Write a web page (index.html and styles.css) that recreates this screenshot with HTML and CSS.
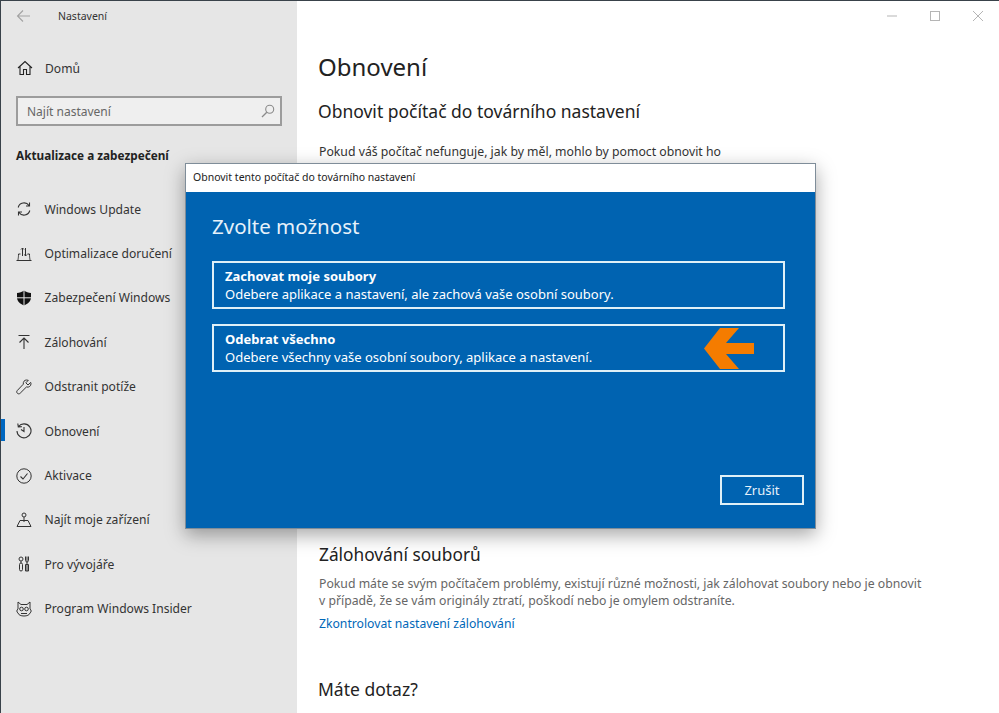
FILE: index.html
```html
<!DOCTYPE html>
<html lang="cs">
<head>
<meta charset="utf-8">
<title>Nastavení</title>
<link rel="stylesheet" href="styles.css">
</head>
<body>
<div class="window">
  <aside class="sidebar">
    <div class="titlebar">
      <svg class="back" width="16" height="14" viewBox="0 0 16 14"><path d="M14 7H1.500M7 1.500 1.500 7 7 12.500" fill="none" stroke="#a3a3a3" stroke-width="1.100"/></svg>
      <span class="app-title">Nastavení</span>
    </div>
    <div class="home">
      <svg class="icon" width="16" height="16" viewBox="0 0 16 16"><path d="M1 8 8 1.500 15 8M3 6.500V14.500H6.500V9.500H9.500V14.500H13V6.500" fill="none" stroke="#222" stroke-width="1.100"/></svg>
      <span>Domů</span>
    </div>
    <div class="search">
      <span>Najít nastavení</span>
      <svg width="14" height="14" viewBox="0 0 14 14"><circle cx="8.700" cy="5.300" r="4" fill="none" stroke="#8a8a8a" stroke-width="1.100"/><path d="M5.800 8.200 1 13" stroke="#8a8a8a" stroke-width="1.300"/></svg>
    </div>
    <h2 class="section">Aktualizace a zabezpečení</h2>
    <nav class="nav">
      <div class="nav-item">
        <svg class="icon" width="16" height="16" viewBox="0 0 16 16"><path d="M2.200 6.500A6 6 0 0 1 13 4.500M13.800 9.500A6 6 0 0 1 3 11.500M13.500 1.500V5H10M2.500 14.500V11H6" fill="none" stroke="#333" stroke-width="1.100"/></svg>
        <span>Windows Update</span>
      </div>
      <div class="nav-item">
        <svg class="icon" width="16" height="16" viewBox="0 0 16 16"><path d="M.5 14.500H15.500M2 14.500C2 12.500 2.500 12.500 2.500 8H4.500M14 14.500C14 12.500 13.500 12.500 13.500 8H11.500M6.500 10V2M5 3.500 6.500 2 8 3.500M9.500 2V10M8.500 8.500 9.500 10 11 8.500" fill="none" stroke="#333" stroke-width="1"/></svg>
        <span>Optimalizace doručení</span>
      </div>
      <div class="nav-item">
        <svg class="icon" width="16" height="16" viewBox="0 0 16 16"><path d="M8 .5C6 2 3.500 2.800 1 3V7.500C1 11 4 14 8 15.500 12 14 15 11 15 7.500V3C12.500 2.800 10 2 8 .5Z" fill="#111"/><path d="M8 0V16M0 7.800H16" stroke="#e6e6e6" stroke-width="1"/></svg>
        <span>Zabezpečení Windows</span>
      </div>
      <div class="nav-item">
        <svg class="icon" width="16" height="16" viewBox="0 0 16 16"><path d="M2.500 1.500H13.500M8 15V4M3.500 8.500 8 4l4.500 4.500" fill="none" stroke="#333" stroke-width="1.100"/></svg>
        <span>Zálohování</span>
      </div>
      <div class="nav-item">
        <svg class="icon" width="16" height="16" viewBox="0 0 16 16"><path d="M10.500 1C8.500 1 7 2.700 7.300 5.200L1.300 11.500C.500 12.300.500 13.500 1.400 14.300 2.200 15.100 3.400 15 4.200 14.200L10.400 8C13 8.700 15 7 15 4.700 15 4.200 14.900 3.800 14.700 3.400L12 6 9.800 3.800 12.300 1.300C11.800 1.100 11.100 1 10.500 1Z" fill="none" stroke="#333" stroke-width="1"/></svg>
        <span>Odstranit potíže</span>
      </div>
      <div class="nav-item active">
        <svg class="icon" width="16" height="16" viewBox="0 0 16 16"><path d="M2.500 3.500A7 7 0 1 1 1 8M1.800 .5 2.300 4 5.800 3.600M8 4V8.500L5 6.500" fill="none" stroke="#333" stroke-width="1.100"/></svg>
        <span>Obnovení</span>
      </div>
      <div class="nav-item">
        <svg class="icon" width="16" height="16" viewBox="0 0 16 16"><circle cx="8" cy="8" r="7.200" fill="none" stroke="#333" stroke-width="1"/><path d="M4.500 8.500 7 11 11.500 5.500" fill="none" stroke="#333" stroke-width="1.100"/></svg>
        <span>Aktivace</span>
      </div>
      <div class="nav-item">
        <svg class="icon" width="16" height="16" viewBox="0 0 16 16"><circle cx="8" cy="3" r="2" fill="none" stroke="#333"/><path d="M8 5V10M4 8.500H12L15 14.500H1Z" fill="none" stroke="#333" stroke-width="1"/></svg>
        <span>Najít moje zařízení</span>
      </div>
      <div class="nav-item">
        <svg class="icon" width="16" height="16" viewBox="0 0 16 16"><rect x="3.500" y="7" width="3" height="8" rx="1.500" fill="none" stroke="#333"/><circle cx="5" cy="3" r="2" fill="none" stroke="#333"/><path d="M5 5V7M9.500 .5V4.500C9.500 5.500 10.300 6 11 6S12.500 5.500 12.500 4.500V.5M11 .5V15M9.500 8.500H12.500V15H9.500Z" fill="none" stroke="#333"/></svg>
        <span>Pro vývojáře</span>
      </div>
      <div class="nav-item">
        <svg class="icon" width="16" height="16" viewBox="0 0 16 16"><path d="M2 1 5 3.500H11L14 1V8C15.500 9 15.500 11 14 12 13.500 14 11 15 8 15S2.500 14 2 12C.500 11 .500 9 2 8Z" fill="none" stroke="#333"/><circle cx="5.500" cy="8" r="1.800" fill="none" stroke="#333"/><circle cx="10.500" cy="8" r="1.800" fill="none" stroke="#333"/><path d="M5 12.500H11" stroke="#333"/></svg>
        <span>Program Windows Insider</span>
      </div>
    </nav>
  </aside>

  <main class="content">
    <div class="controls">
      <svg width="14" height="14" viewBox="0 0 14 14"><path d="M2 7H12" stroke="#b5b5b5" stroke-width="1"/></svg>
      <svg width="14" height="14" viewBox="0 0 14 14"><rect x="2.500" y="2.500" width="9" height="9" fill="none" stroke="#b5b5b5"/></svg>
      <svg width="14" height="14" viewBox="0 0 14 14"><path d="M2 2 12 12M12 2 2 12" stroke="#b5b5b5" stroke-width="1"/></svg>
    </div>
    <h1 class="page-title">Obnovení</h1>
    <h2 class="sub-title">Obnovit počítač do továrního nastavení</h2>
    <p class="intro">Pokud váš počítač nefunguje, jak by měl, mohlo by pomoct obnovit ho</p>
    <h2 class="backup-title">Zálohování souborů</h2>
    <p class="backup-text">Pokud máte se svým počítačem problémy, existují různé možnosti, jak zálohovat soubory nebo je obnovit v případě, že se vám originály ztratí, poškodí nebo je omylem odstraníte.</p>
    <a class="link">Zkontrolovat nastavení zálohování</a>
    <h2 class="question">Máte dotaz?</h2>
  </main>

  <section class="dialog">
    <header class="dialog-title">Obnovit tento počítač do továrního nastavení</header>
    <div class="dialog-body">
      <h2 class="dialog-heading">Zvolte možnost</h2>
      <div class="option">
        <strong>Zachovat moje soubory</strong>
        <span>Odebere aplikace a nastavení, ale zachová vaše osobní soubory.</span>
      </div>
      <div class="option">
        <strong>Odebrat všechno</strong>
        <span>Odebere všechny vaše osobní soubory, aplikace a nastavení.</span>
        <svg class="arrow" width="50" height="41" viewBox="0 0 50 41"><path d="M35 0H16L0 20.500 16 41H35L22 26H50V15H22Z" fill="#f57c00"/></svg>
      </div>
      <div class="dialog-actions">
        <div class="cancel">Zrušit</div>
      </div>
    </div>
  </section>
</div>
</body>
</html>
```

FILE: styles.css
```css
* { box-sizing: border-box; }
html, body { margin: 0; height: 100%; overflow: hidden; }
body { font-family: "Noto Sans", "Open Sans", sans-serif; color: #222; background: #fff; }
h1, h2, p { margin: 0; font-weight: 400; }

.window {
  position: relative;
  display: flex;
  width: 999px;
  height: 713px;
  overflow: hidden;
  border-top: 1px solid #39424a;
  border-left: 1px solid #39424a;
}

.sidebar {
  flex: 0 0 296px;
  background: #e6e6e6;
  padding: 0 15px;
  font-size: 12.100px;
}
.titlebar { display: flex; align-items: center; height: 30px; }
.back { flex: none; }
.app-title { margin-left: 26px; font-size: 10.500px; color: #333; }
.home { display: flex; align-items: center; gap: 12px; height: 20px; margin-top: 27px; padding-left: 1px; color: #333; }
.icon { flex: none; }
.search {
  display: flex;
  align-items: center;
  justify-content: space-between;
  width: 266px;
  height: 30px;
  margin-top: 18px;
  padding: 0 5px 0 9px;
  border: 2px solid #9c9c9c;
  background: #efefef;
  color: #666;
  font-size: 12px;
}
.section { margin-top: 19px; height: 20px; line-height: 20px; font-size: 11.750px; font-weight: 700; color: #222; }

.nav { margin: 22px 0 0 -15px; }
.nav-item {
  position: relative;
  display: flex;
  align-items: center;
  gap: 12.500px;
  height: 44.400px;
  padding-left: 15px;
  color: #333;
}
.nav-item.active::before {
  content: "";
  position: absolute;
  left: 0;
  top: 10px;
  width: 4px;
  height: 22px;
  background: #0067c0;
}

.content { position: relative; flex: 1; padding: 0 0 0 21px; background: #fff; }
.controls { position: absolute; top: 8px; right: 14px; display: flex; gap: 29px; }
.page-title { margin-top: 48px; font-size: 24px; line-height: 36px; color: #222; }
.sub-title { margin-top: 13px; font-size: 17.500px; line-height: 26px; color: #222; }
.intro { margin: 19px 0 0 1px; font-size: 12.250px; line-height: 18px; color: #333; white-space: nowrap; }
.backup-title { margin: 382px 0 0 1px; font-size: 17.300px; line-height: 24px; color: #222; }
.backup-text { margin: 8px 0 0 1px; width: 610px; font-size: 12.250px; line-height: 17px; color: #666; }
.link { display: block; margin: 6px 0 0 1px; font-size: 12.200px; line-height: 18px; color: #0067b8; }
.question { margin-top: 44px; font-size: 17.500px; line-height: 24px; color: #222; }

.dialog {
  position: absolute;
  left: 184px;
  top: 162px;
  width: 631px;
  height: 366px;
  display: flex;
  flex-direction: column;
  border: 1px solid #7f8d99;
  box-shadow: 0 6px 18px rgba(0, 0, 0, .35);
}
.dialog-title {
  flex: 0 0 28px;
  padding-left: 7px;
  line-height: 27px;
  font-size: 10.500px;
  background: #fff;
  color: #222;
}
.dialog-body { flex: 1; display: flex; flex-direction: column; padding: 19px 30px 23px 26px; background: #0063b1; color: #fff; }
.dialog-heading { font-size: 20.500px; line-height: 30px; color: #e6f1fa; }
.option {
  position: relative;
  display: flex;
  flex-direction: column;
  justify-content: center;
  width: 573px;
  height: 48px;
  margin-top: 15px;
  padding: 0 0 0 11px;
  border: 2px solid #dff0f7;
  font-size: 13px;
  line-height: 18px;
}
.option:first-of-type { margin-top: 20px; }
.arrow { position: absolute; right: 29px; top: 2px; }
.dialog-actions { margin-top: auto; display: flex; justify-content: flex-end; margin-right: -19px; }
.cancel {
  width: 84px;
  height: 30px;
  border: 2px solid #dff0f7;
  text-align: center;
  line-height: 26px;
  font-size: 13px;
  color: #e6f1fa;
}
```
